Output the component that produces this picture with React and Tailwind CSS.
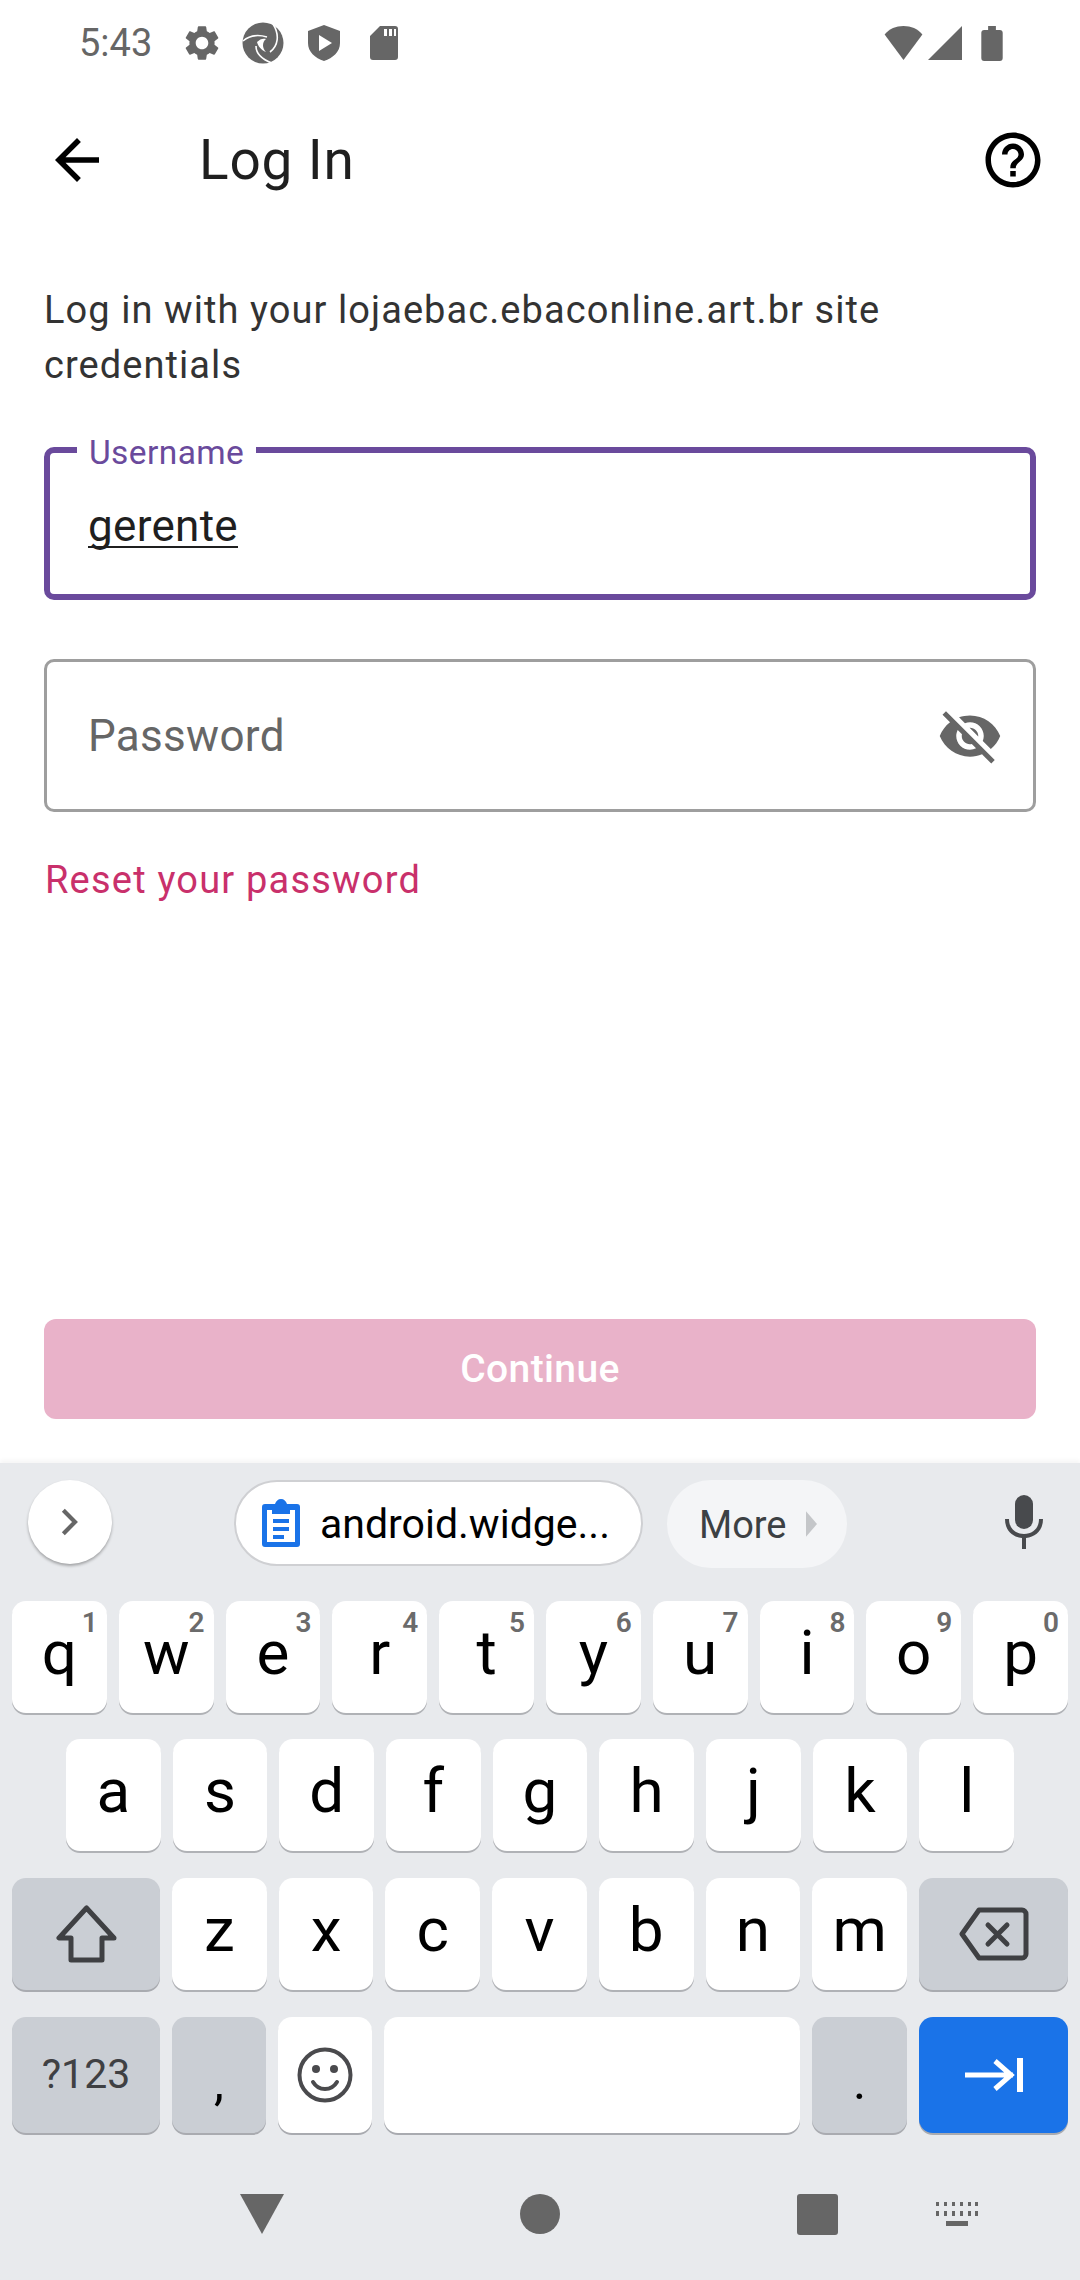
const Icon = ({ d, className }) => (
  <svg viewBox="0 0 24 24" className={className} fill="currentColor">
    <path d={d} />
  </svg>
);

const SETTINGS =
  "M19.14 12.94c.04-.3.06-.61.06-.94 0-.32-.02-.64-.07-.94l2.03-1.58c.18-.14.23-.41.12-.61l-1.92-3.32c-.12-.22-.37-.29-.59-.22l-2.39.96c-.5-.38-1.03-.7-1.62-.94l-.36-2.54c-.04-.24-.24-.41-.48-.41h-3.84c-.24 0-.43.17-.47.41l-.36 2.54c-.59.24-1.13.57-1.62.94l-2.39-.96c-.22-.08-.47 0-.59.22L2.74 8.87c-.12.21-.08.47.12.61l2.03 1.58c-.05.3-.09.63-.09.94s.02.64.07.94l-2.03 1.58c-.18.14-.23.41-.12.61l1.92 3.32c.12.22.37.29.59.22l2.39-.96c.5.38 1.03.7 1.62.94l.36 2.54c.05.24.24.41.48.41h3.84c.24 0 .44-.17.47-.41l.36-2.54c.59-.24 1.13-.56 1.62-.94l2.39.96c.22.08.47 0 .59-.22l1.92-3.32c.12-.22.07-.47-.12-.61l-2.01-1.58zM12 15.6c-1.98 0-3.6-1.62-3.6-3.6s1.62-3.6 3.6-3.6 3.6 1.62 3.6 3.6-1.62 3.6-3.6 3.6z";
const BACK = "M20 11H7.83l5.59-5.59L12 4l-8 8 8 8 1.41-1.41L7.83 13H20v-2z";
const HELP =
  "M11 18h2v-2h-2v2zm1-16C6.48 2 2 6.48 2 12s4.48 10 10 10 10-4.48 10-10S17.52 2 12 2zm0 18c-4.41 0-8-3.59-8-8s3.59-8 8-8 8 3.59 8 8-3.59 8-8 8zm0-14c-2.21 0-4 1.79-4 4h2c0-1.1.9-2 2-2s2 .9 2 2c0 2-3 1.75-3 5h2c0-2.25 3-2.5 3-5 0-2.21-1.79-4-4-4z";
const EYE_OFF =
  "M12 7c2.76 0 5 2.24 5 5 0 .65-.13 1.26-.36 1.83l2.92 2.92c1.51-1.26 2.7-2.89 3.43-4.75-1.73-4.39-6-7.5-11-7.5-1.4 0-2.74.25-3.98.7l2.16 2.16C10.74 7.13 11.35 7 12 7zM2 4.27l2.28 2.28.46.46C3.08 8.3 1.78 10.02 1 12c1.73 4.39 6 7.5 11 7.5 1.55 0 3.03-.3 4.38-.84l.42.42L19.73 22 21 20.73 3.27 3 2 4.27zM7.53 9.8l1.55 1.55c-.05.21-.08.43-.08.65 0 1.66 1.34 3 3 3 .22 0 .44-.03.65-.08l1.55 1.55c-.67.33-1.41.53-2.2.53-2.76 0-5-2.24-5-5 0-.79.2-1.53.53-2.2zm4.31-.78l3.15 3.15.02-.16c0-1.66-1.34-3-3-3l-.17.01z";

const StatusBar = () => (
  <div className="h-[72px] flex items-center pl-[79px] pr-[77px] text-[#666666]">
    <span className="text-[38px] w-[102px] leading-none mt-[14px]">5:43</span>
    <div className="flex items-center mt-[14px]">
      <Icon d={SETTINGS} className="w-[42px] h-[42px]" />
      <svg viewBox="0 0 42 42" className="w-[42px] h-[42px] ml-[19px]">
        <circle cx="21" cy="21" r="20.5" fill="currentColor" />
        <path
          d="M31 2C38 13 36 24 28 30M1 19C8 13 15 12 25 15M14 24C14 31 19 37 30 41"
          fill="none"
          stroke="white"
          strokeWidth="1.6"
        />
        <path d="M15 20C18 17 21 16 24 17C20 20 20 26 24 30C19 28 16 24 15 20z" fill="white" />
      </svg>
      <svg viewBox="0 0 32 36" className="w-[32px] h-[36px] ml-[24px]" fill="currentColor" fillRule="evenodd">
        <path d="M16 0l16 6v12c0 9-7 15-16 18C7 33 0 27 0 18V6zM11 10v16l13-8z" />
      </svg>
      <svg viewBox="0 0 28 34" className="w-[28px] h-[34px] ml-[30px]" fill="currentColor" fillRule="evenodd">
        <path d="M10 0h15a3 3 0 0 1 3 3v28a3 3 0 0 1-3 3H3a3 3 0 0 1-3-3V10zM14 3v7h3V3zM19 3v7h3V3zM24 3v7h2V3z" />
      </svg>
    </div>
    <div className="ml-auto flex items-center mt-[14px]">
      <svg viewBox="0 0 40 36" className="w-[41px] h-[34px]" fill="currentColor">
        <path d="M20 36L0 9C5 3 12 0 20 0s15 3 20 9z" />
      </svg>
      <svg viewBox="0 0 34 34" className="ml-[4px] w-[34px] h-[34px]" fill="currentColor">
        <path d="M0 34L34 0v34z" />
      </svg>
      <svg viewBox="0 0 22 36" className="ml-[19px] w-[22px] h-[35px]" fill="currentColor">
        <path d="M7 0h8v4h4a3 3 0 0 1 3 3v26a3 3 0 0 1-3 3H3a3 3 0 0 1-3-3V7a3 3 0 0 1 3-3h4z" />
      </svg>
    </div>
  </div>
);

const Field = ({ focused, children }) => (
  <div
    className={`relative h-[153px] rounded-[10px] bg-white flex items-center pr-[32px] ${
      focused ? "border-[6px] border-[#6a4a9c] pl-[38px]" : "border-[3px] border-[#9e9e9e] pl-[41px]"
    }`}
  >
    {children}
  </div>
);

const Key = ({ label, hint }) => (
  <div className="relative flex-1 h-[112px] bg-white rounded-[14px] shadow-[0_2px_0_#b0b2b6] flex items-center justify-center text-[62px] text-black leading-none pb-[8px]">
    {label}
    {hint && (
      <span className="absolute top-[6px] right-[9px] text-[28px] font-semibold text-[#6b6b6b] leading-[32px]">
        {hint}
      </span>
    )}
  </div>
);

const GrayKey = ({ className, children }) => (
  <div
    className={`rounded-[14px] flex items-center justify-center shadow-[0_2px_0_#a9abb0] ${className}`}
  >
    {children}
  </div>
);

const row1 = ["q", "w", "e", "r", "t", "y", "u", "i", "o", "p"];
const row2 = ["a", "s", "d", "f", "g", "h", "j", "k", "l"];
const row3 = ["z", "x", "c", "v", "b", "n", "m"];

const Keyboard = () => (
  <div className="h-[817px] bg-[#e8eaed] shadow-[0_-3px_4px_rgba(0,0,0,0.04)] relative">
    {/* Suggestion strip */}
    <div className="h-[138px] flex items-start pt-[17px]">
      <div className="ml-[28px] w-[84px] h-[84px] rounded-full bg-white shadow-[0_2px_3px_rgba(0,0,0,0.3)] flex items-center justify-center">
        <svg viewBox="0 0 24 34" className="w-[20px] h-[30px] text-[#666666]" fill="none" stroke="currentColor" strokeWidth="5">
          <path d="M4 3l14 14L4 31" />
        </svg>
      </div>
      <div className="ml-[122px] w-[409px] h-[86px] rounded-full bg-white border-2 border-[#cfd0d3] flex items-center pl-[26px]">
        <svg viewBox="0 0 38 48" className="w-[38px] h-[48px] text-[#1a73e8]" fill="currentColor" fillRule="evenodd">
          <path d="M3 5h10c1-3 3-5 6-5s5 2 6 5h10a3 3 0 0 1 3 3v37a3 3 0 0 1-3 3H3a3 3 0 0 1-3-3V8a3 3 0 0 1 3-3zM5 11v32h28V11h-5v4H10v-4zM11 20h16v4H11zM11 28h16v4H11zM11 36h11v4H11z" />
        </svg>
        <span className="ml-[20px] mt-[2px] text-[41px] text-black leading-none">android.widge...</span>
      </div>
      <div className="ml-[24px] w-[180px] h-[88px] rounded-full bg-[#f4f5f7] flex items-center pl-[32px]">
        <span className="mt-[2px] text-[38px] text-[#3c4043] leading-none">More</span>
        <svg viewBox="0 0 12 28" className="w-[11px] h-[26px] ml-[19px] text-[#c4c6c9]" fill="currentColor">
          <path d="M0 0l12 14L0 28z" />
        </svg>
      </div>
      <svg viewBox="0 0 38 54" className="ml-[158px] mt-[15px] w-[38px] h-[54px] text-[#484a4d]" fill="currentColor">
        <rect x="10" y="0" width="18" height="34" rx="9" />
        <path d="M0 24h4c0 9 6 15 15 15s15-6 15-15h4c0 11-7 18-17 19v11h-4V43C7 42 0 35 0 24z" />
      </svg>
    </div>

    {/* Key rows */}
    <div className="flex gap-[12px] px-[12px]">
      {row1.map((k, i) => (
        <Key key={k} label={k} hint={String((i + 1) % 10)} />
      ))}
    </div>
    <div className="flex gap-[12px] px-[66px] mt-[26px]">
      {row2.map((k) => (
        <Key key={k} label={k} />
      ))}
    </div>
    <div className="flex gap-[12px] px-[12px] mt-[27px]">
      <GrayKey className="w-[148px] h-[112px] bg-[#caced4]">
        <svg viewBox="0 0 61 58" className="w-[61px] h-[58px] text-[#3f4043]" fill="none" stroke="currentColor" strokeWidth="5" strokeLinejoin="round">
          <path d="M30.5 3L3 33H15V55H46V33H58Z" />
        </svg>
      </GrayKey>
      {row3.map((k) => (
        <Key key={k} label={k} />
      ))}
      <GrayKey className="w-[149px] h-[112px] bg-[#caced4]">
        <svg viewBox="0 0 70 54" className="w-[70px] h-[54px] text-[#3f4043]" fill="none" stroke="currentColor" strokeWidth="5" strokeLinejoin="round" strokeLinecap="round">
          <path d="M20 3H63a4 4 0 0 1 4 4V47a4 4 0 0 1-4 4H20L3 27Z" />
          <path d="M29 18L48 37M48 18L29 37" />
        </svg>
      </GrayKey>
    </div>
    <div className="flex gap-[12px] px-[12px] mt-[27px] items-start">
      <GrayKey className="w-[148px] h-[116px] bg-[#caced4] text-[41px] text-[#3f4043]">?123</GrayKey>
      <GrayKey className="w-[94px] h-[116px] bg-[#caced4] text-[50px] text-black pt-[14px]">,</GrayKey>
      <GrayKey className="w-[94px] h-[116px] bg-white text-[#4a4a4d]">
        <svg viewBox="0 0 56 56" className="w-[56px] h-[56px]" fill="none" stroke="currentColor" strokeWidth="4">
          <circle cx="28" cy="28" r="25.5" />
          <circle cx="19" cy="22" r="4" fill="currentColor" stroke="none" />
          <circle cx="37" cy="22" r="4" fill="currentColor" stroke="none" />
          <path d="M16 35c3 5 8 7 12 7s9-2 12-7" strokeLinecap="round" />
        </svg>
      </GrayKey>
      <GrayKey className="flex-1 h-[116px] bg-white" />
      <GrayKey className="w-[95px] h-[116px] bg-[#caced4] text-[50px] text-black pt-[14px]">.</GrayKey>
      <GrayKey className="w-[149px] h-[116px] bg-[#1a73e8] text-white">
        <svg viewBox="0 0 58 34" className="w-[58px] h-[34px]" fill="none" stroke="currentColor" strokeWidth="5">
          <path d="M0 17H48M30 3L46 17L30 31" />
          <path d="M55 0V34" strokeWidth="6" />
        </svg>
      </GrayKey>
    </div>

    {/* Navigation bar */}
    <div className="absolute left-0 right-0 bottom-[44px] h-[44px] text-[#666666]">
      <div className="flex items-center h-full pl-[240px]">
        <svg viewBox="0 0 44 40" className="w-[44px] h-[40px]" fill="currentColor">
          <path d="M0 0h44L22 40z" />
        </svg>
        <div className="ml-[236px] w-[40px] h-[40px] rounded-full bg-[#666666]" />
        <div className="ml-[237px] w-[41px] h-[41px] rounded-[3px] bg-[#666666]" />
        <svg viewBox="0 0 42 24" className="ml-[98px] w-[42px] h-[24px]" fill="currentColor">
          <path d="M0 0h3v4H0zM8 0h3v4H8zM16 0h3v4h-3zM24 0h3v4h-3zM32 0h3v4h-3zM39 0h3v4h-3zM0 9h3v5H0zM8 9h3v5H8zM16 9h3v5h-3zM24 9h3v5h-3zM32 9h3v5h-3zM39 9h3v5h-3zM10 19h22v5H10z" />
        </svg>
      </div>
    </div>
  </div>
);

export default function App() {
  return (
    <div className="w-[1080px] h-[2280px] bg-white flex flex-col overflow-hidden font-['Roboto',sans-serif]">
      <StatusBar />

      {/* Toolbar */}
      <div className="h-[176px] flex items-center">
        <Icon d={BACK} className="ml-[44px] w-[66px] h-[66px] text-black" />
        <h1 className="ml-[89px] text-[55px] tracking-[0.8px] text-[#1f1f1f] leading-none">Log In</h1>
        <Icon d={HELP} className="ml-auto mr-[34px] w-[66px] h-[66px] text-black" />
      </div>

      {/* Form */}
      <div className="flex-1 flex flex-col px-[44px]">
        <p className="mt-[35px] text-[38px] leading-[55px] tracking-[1.07px] text-[#333333]">
          Log in with your lojaebac.ebaconline.art.br site credentials
        </p>
        <div className="mt-[54px]">
          <Field focused>
            <span className="absolute left-[27px] -top-[16px] bg-white px-[12px] text-[33.5px] leading-[32px] tracking-[0.4px] text-[#6a4a9c]">
              Username
            </span>
            <span className="mt-[4px] text-[44px] text-[#1f1f1f] underline underline-offset-[5px] decoration-[2px] [text-decoration-skip-ink:none] tracking-[0.3px]">
              gerente
            </span>
          </Field>
        </div>
        <div className="mt-[59px]">
          <Field>
            <span className="text-[44px] text-[#666666] tracking-[0.3px]">Password</span>
            <Icon d={EYE_OFF} className="ml-auto -mr-[2px] w-[66px] h-[66px] text-[#666666]" />
          </Field>
        </div>
        <a className="mt-[45px] text-[38px] leading-[46px] tracking-[1.2px] text-[#c9306b] pl-[1px]">Reset your password</a>
        <div className="mt-auto mb-[44px] h-[100px] rounded-[12px] bg-[#e9b2c9] flex items-center justify-center text-[39px] font-medium text-white tracking-[0.4px]">
          Continue
        </div>
      </div>

      <Keyboard />
    </div>
  );
}
